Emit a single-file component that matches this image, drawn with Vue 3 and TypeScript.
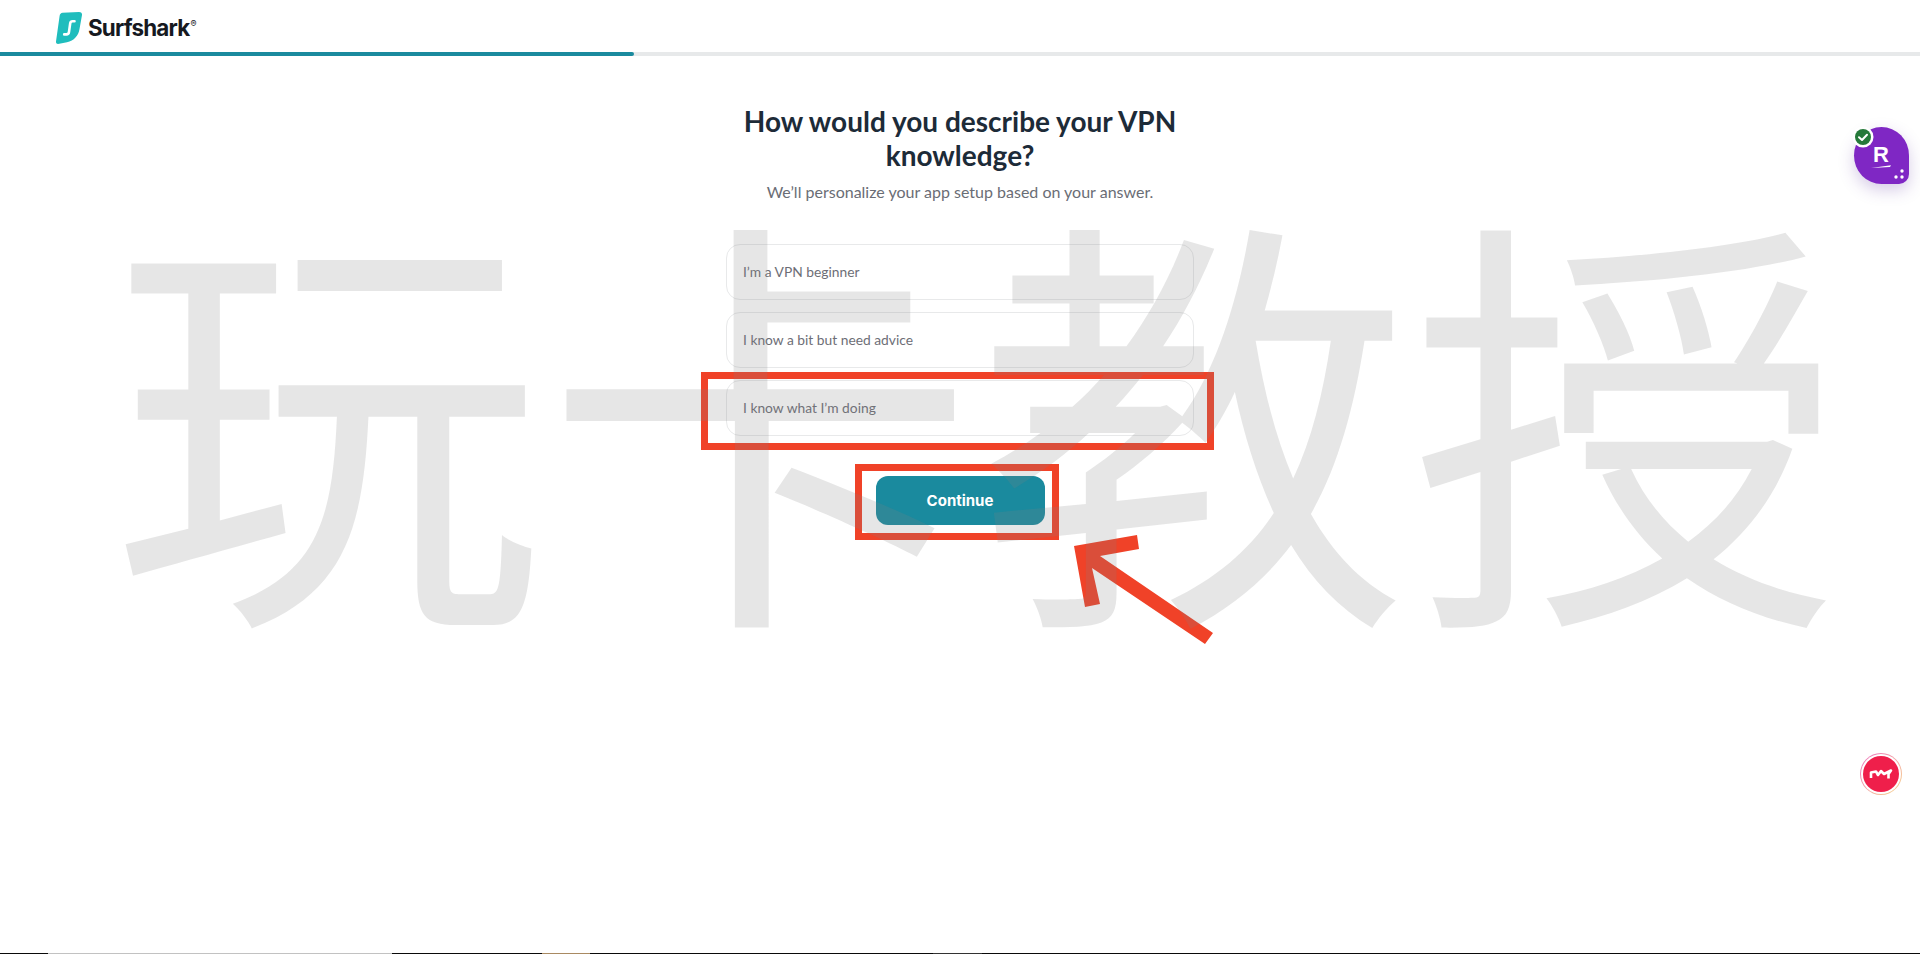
<script setup lang="ts">
const options: string[] = ["I’m a VPN beginner", "I know a bit but need advice", "I know what I’m doing"];
const strip: { w: number; c: string }[] = [
  { w: 48, c: "#0a0a0a" }, { w: 344, c: "#c2c2c2" }, { w: 150, c: "#0a0a0a" }, { w: 48, c: "#a98a62" },
  { w: 343, c: "#0a0a0a" }, { w: 49, c: "#333333" }, { w: 938, c: "#0a0a0a" },
];
</script>

<template>
  <div class="page">
    <header class="top">
      <svg class="logo" viewBox="0 0 26 32" width="26" height="32" aria-hidden="true">
        <path d="M6.5 .8 L23 0 C25 0 26.2 1.2 26 3 L23.5 17 C22.5 24 18 28.5 11 30.3 L2 32 C.6 32 -.2 31 0 29.5 L3.6 4 C3.9 2 5 .9 6.5 .8Z" fill="#1fbdbd"/>
        <path d="M18.5 9.2 H16.6 C15 9.2 14.4 10 14.2 11.4 L13 19.8 C12.8 21.6 12 22.4 10.4 22.4 H8.2" fill="none" stroke="#fff" stroke-width="2.6" stroke-linecap="round"/>
      </svg>
      <span class="brand">Surfshark</span><span class="reg">®</span>
    </header>
    <div class="progress"><div class="progress-fill"></div></div>

    <main class="content">
      <h1 class="title">How would you describe your VPN knowledge?</h1>
      <p class="sub">We’ll personalize your app setup based on your answer.</p>
      <div class="options">
        <div v-for="o in options" :key="o" class="option">{{ o }}</div>
      </div>
      <button class="continue" type="button">Continue</button>
    </main>

    <div class="mark mark-option"></div>
    <div class="mark mark-button"></div>
    <svg class="arrow" viewBox="0 0 160 120" width="160" height="120" aria-hidden="true">
      <path d="M0 16 L63 5 L65 19 L26 26 L139 103 L131 114 L18 38 L26 74 L11 77Z" fill="#f04228"/>
    </svg>

    <div class="rakuten">
      <div class="blob">
        <span class="r">R</span>
        <svg class="swoosh" viewBox="0 0 20 4" width="20" height="4" aria-hidden="true"><path d="M0 3 L20 .3 L19 2 Z" fill="#fff"/></svg>
        <svg class="dots" viewBox="0 0 10 10" width="10" height="10" aria-hidden="true">
          <circle cx="8" cy="2" r="1.7" fill="#fff"/><circle cx="2" cy="8" r="1.7" fill="#fff"/><circle cx="8" cy="8" r="1.7" fill="#fff"/>
        </svg>
      </div>
      <svg class="check" viewBox="0 0 22 22" width="22" height="22" aria-hidden="true">
        <circle cx="11" cy="11" r="10.5" fill="#fff"/><circle cx="11" cy="11" r="8" fill="#25793a"/>
        <path d="M7 11.2 L10 14 L15 8.8" fill="none" stroke="#fff" stroke-width="2" stroke-linecap="round" stroke-linejoin="round"/>
      </svg>
    </div>

    <div class="red-btn">
      <svg viewBox="0 0 24 12" width="24" height="12" aria-hidden="true">
        <path d="M2 10 V4.5 L7 3.5 L9 7 L12 3 L15 6 L22 2.5 L19.5 6 V10.5" fill="none" stroke="#fff" stroke-width="2.6" stroke-linejoin="round"/>
      </svg>
    </div>

    <div class="strip">
      <i v-for="(s, i) in strip" :key="i" :style="{ width: s.w + 'px', background: s.c }"></i>
    </div>

    <div class="watermark">玩卡教授</div>
  </div>
</template>

<style>
html, body { margin: 0; background: #fff; }
</style>

<style scoped>
.page { position: relative; width: 1920px; height: 954px; overflow: hidden; background: #fff; font-family: Lato, "Noto Sans", sans-serif; color: #1d2b38; }
.top { height: 52px; box-sizing: border-box; padding: 12px 0 0 56px; display: flex; align-items: flex-start; }
.logo { display: block; flex: none; }
.brand { margin: 1px 0 0 6px; font: 700 22.4px/30px Inter, sans-serif; letter-spacing: -.8px; color: #16191f; }
.reg { font: 400 9px/12px Inter, sans-serif; margin: 6px 0 0 1px; color: #16191f; }
.progress { height: 4px; background: #e7e9ea; }
.progress-fill { width: 634px; height: 4px; background: #1a8a9e; border-radius: 0 2px 2px 0; }
.content { width: 468px; margin: 0 auto; padding-top: 48px; display: flex; flex-direction: column; align-items: center; text-align: center; }
.title { margin: 0; font: 700 28px/34px Lato, sans-serif; color: #1d2b38; width: 450px; }
.sub { margin: 9px 0 0; font: 400 16px/22px Lato, sans-serif; color: #6a6d75; }
.options { width: 100%; margin-top: 41px; display: flex; flex-direction: column; gap: 12px; }
.option { height: 56px; box-sizing: border-box; border: 1px solid #e8e9ea; border-radius: 14px; padding-left: 16px; display: flex; align-items: center; font: 400 13.8px/20px Lato, sans-serif; color: #6d6e76; text-align: left; }
.continue { margin-top: 40px; width: 169px; height: 49px; border: 0; border-radius: 12px; background: #1a8a9e; color: #fff; font: 700 15px/20px Inter, sans-serif; padding: 0; }
.mark { position: absolute; box-sizing: border-box; border: 7px solid #f04228; }
.mark-option { left: 701px; top: 372px; width: 513px; height: 78px; }
.mark-button { left: 855px; top: 464px; width: 204px; height: 76px; }
.arrow { position: absolute; left: 1074px; top: 530px; }
.rakuten { position: absolute; left: 1853px; top: 126px; width: 56px; height: 58px; }
.blob { position: absolute; inset: 1px 0 0 1px; background: #7f27c4; border-radius: 50% 50% 10px 50%; box-shadow: 0 6px 16px rgba(90, 50, 160, .25); }
.r { position: absolute; left: 19px; top: 13px; font: 700 22px/30px "Liberation Sans", sans-serif; color: #fff; }
.swoosh { position: absolute; left: 17px; top: 38px; }
.dots { position: absolute; right: 5px; bottom: 5px; }
.check { position: absolute; left: -1px; top: 0; }
.red-btn { position: absolute; left: 1860px; top: 753px; width: 42px; height: 42px; box-sizing: border-box; padding: 2px; border: 1px solid transparent; border-radius: 50%; background: linear-gradient(#ef1f4b, #ef1f4b) content-box, linear-gradient(#fff, #fff) padding-box, linear-gradient(135deg, #ee6fc0, #f7d98a) border-box; display: flex; align-items: center; justify-content: center; }
.strip { position: absolute; left: 0; bottom: 0; width: 100%; height: 1px; display: flex; }
.strip i { display: block; height: 1px; }
.watermark { position: absolute; left: 111px; top: 105px; font: 400 432px/600px "Noto Sans CJK SC", sans-serif; letter-spacing: 1px; white-space: nowrap; color: rgba(128, 128, 128, .2); pointer-events: none; }
</style>
